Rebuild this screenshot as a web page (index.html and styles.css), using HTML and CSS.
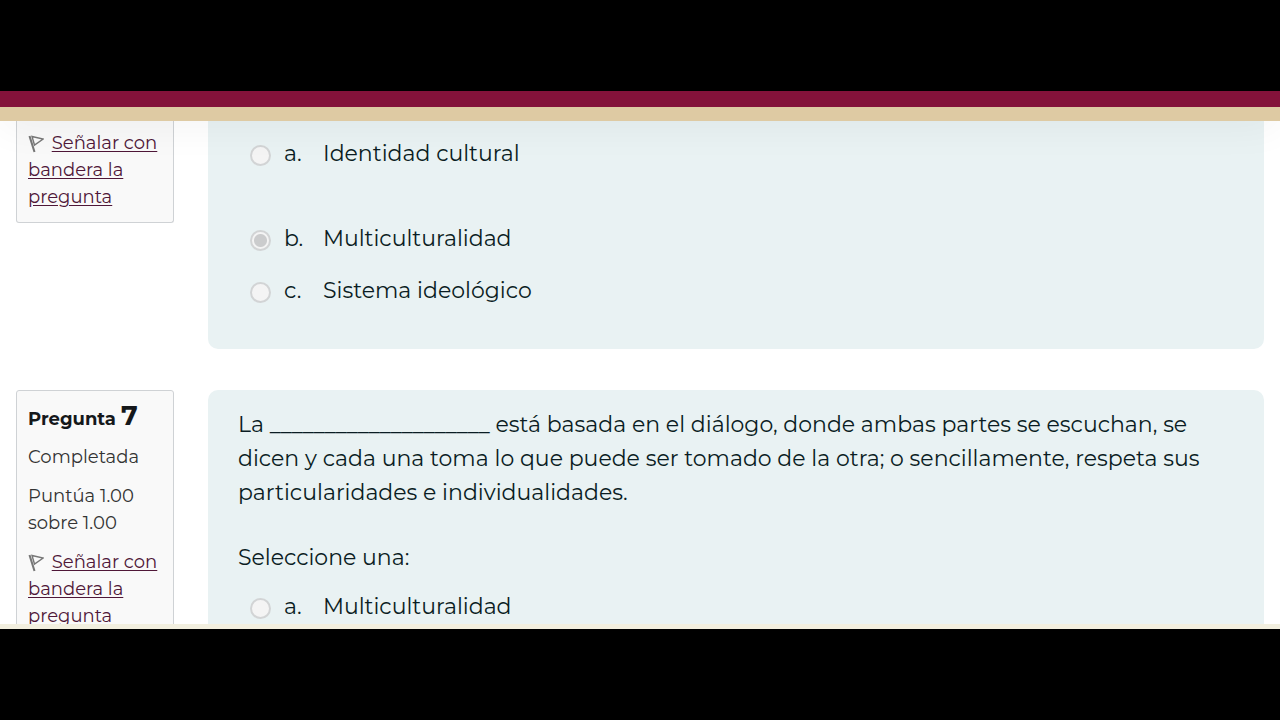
FILE: index.html
```
<!DOCTYPE html>
<html lang="es">
<head>
  <meta charset="UTF-8" />
  <meta name="viewport" content="width=device-width, initial-scale=1.0"/>
  <title>Cuestionario</title>
  <link rel="stylesheet" href="styles.css">
</head>
<body>

<div class="screen">
  <header class="topbar"></header>

  <main class="quiz">
    <!-- PREGUNTA 6 -->
    <section class="question scrolled">
      <div class="info">
        <div class="flag">
          <svg class="flag-icon" viewBox="0 0 16 18" aria-hidden="true">
            <path class="pole" d="M1.5 1 L6.5 17" />
            <path d="M4 1.5 L15.2 4 L6.5 10 Z" />
          </svg>
          <a href="#">Señalar con bandera la pregunta</a>
        </div>
      </div>
      <div class="content">
        <div class="answers">
          <label class="option spaced"><input type="radio" name="q6" disabled /><span>a.</span><span>Identidad cultural</span></label>
          <label class="option"><input type="radio" name="q6" checked disabled /><span>b.</span><span>Multiculturalidad</span></label>
          <label class="option"><input type="radio" name="q6" disabled /><span>c.</span><span>Sistema ideológico</span></label>
        </div>
      </div>
    </section>

    <!-- PREGUNTA 7 -->
    <section class="question">
      <div class="info">
        <h3>Pregunta <span class="number">7</span></h3>
        <p>Completada</p>
        <p>Puntúa 1.00 sobre 1.00</p>
        <div class="flag">
          <svg class="flag-icon" viewBox="0 0 16 18" aria-hidden="true">
            <path class="pole" d="M1.5 1 L6.5 17" />
            <path d="M4 1.5 L15.2 4 L6.5 10 Z" />
          </svg>
          <a href="#">Señalar con bandera la pregunta</a>
        </div>
      </div>
      <div class="content">
        <p class="text">La ____________________ está basada en el diálogo, donde ambas partes se escuchan, se dicen y cada una toma lo que puede ser tomado de la otra; o sencillamente, respeta sus particularidades e individualidades.</p>
        <p class="prompt">Seleccione una:</p>
        <div class="answers">
          <label class="option"><input type="radio" name="q7" disabled /><span>a.</span><span>Multiculturalidad</span></label>
        </div>
      </div>
    </section>
  </main>

  <footer class="bottombar"></footer>
</div>

</body>
</html>
```

FILE: styles.css
```
* { box-sizing: border-box; }
body, html {
  margin: 0; padding: 0;
  height: 100%;
  background: #000;
  font-family: Montserrat, Inter, sans-serif;
}
h3, p { margin: 0; }
body { padding: 91px 0; }
.screen {
  display: flex; flex-direction: column;
  height: 100%;
  overflow: hidden;
  background: #fff;
}
.topbar {
  position: relative; z-index: 1;
  flex: none;
  height: 30px;
  background: #84123a;
  border-bottom: 14px solid #decaa3;
  box-shadow: 0 4px 40px rgba(0, 0, 0, 0.06);
}
.bottombar { flex: none; height: 5px; background: #f2efdf; }
.quiz { flex: 1; min-height: 0; overflow: hidden; padding: 0 16px; }

.question {
  display: grid;
  grid-template-columns: 158px 1fr;
  gap: 34px;
  align-items: start;
  margin-bottom: 41px;
}
.info {
  padding: 10px 11px 11px;
  border: 1px solid #cfd2d5;
  border-radius: 3px;
  background: #f9f9f9;
  color: #333;
  font-size: 18px;
  line-height: 27px;
}
.info h3 { font-size: 18px; line-height: 30px; color: #15181b; margin-bottom: 10px; }
.info p { margin-bottom: 12px; }
.number { font-size: 27px; }
.flag-icon {
  width: 16px; height: 18px;
  margin-right: 3px;
  vertical-align: -4px;
  fill: none; stroke: #777; stroke-width: 1.4;
}
.flag-icon .pole { stroke-width: 2; }
.flag a { color: #4f1738; text-underline-offset: 2px; }

.content {
  padding: 18px 30px 42px;
  border-radius: 10px;
  background: #e9f2f3;
  color: #0b1d23;
  font-size: 22px;
  line-height: 34px;
}
.prompt { margin: 31px 0 15px; }
.answers { display: flex; flex-direction: column; gap: 18px; }
.option {
  display: grid;
  grid-template-columns: 22px 27px 1fr;
  column-gap: 12px;
  padding-left: 12px;
}
.spaced { margin-bottom: 33px; }
.option input {
  appearance: none;
  width: 21px; height: 21px;
  margin: 8px 0 0;
  border: 2px solid #d2d4d5;
  border-radius: 50%;
  background: #f4f4f4;
}
.option input:checked { background: radial-gradient(circle, #cbcccd 6px, #f4f4f4 7px); }

/* question already scrolled under the top bar */
.scrolled .info { border-top: 0; border-radius: 0 0 3px 3px; padding-top: 9px; }
.scrolled .content { border-radius: 0 0 10px 10px; padding: 16px 30px 41px; }
```
